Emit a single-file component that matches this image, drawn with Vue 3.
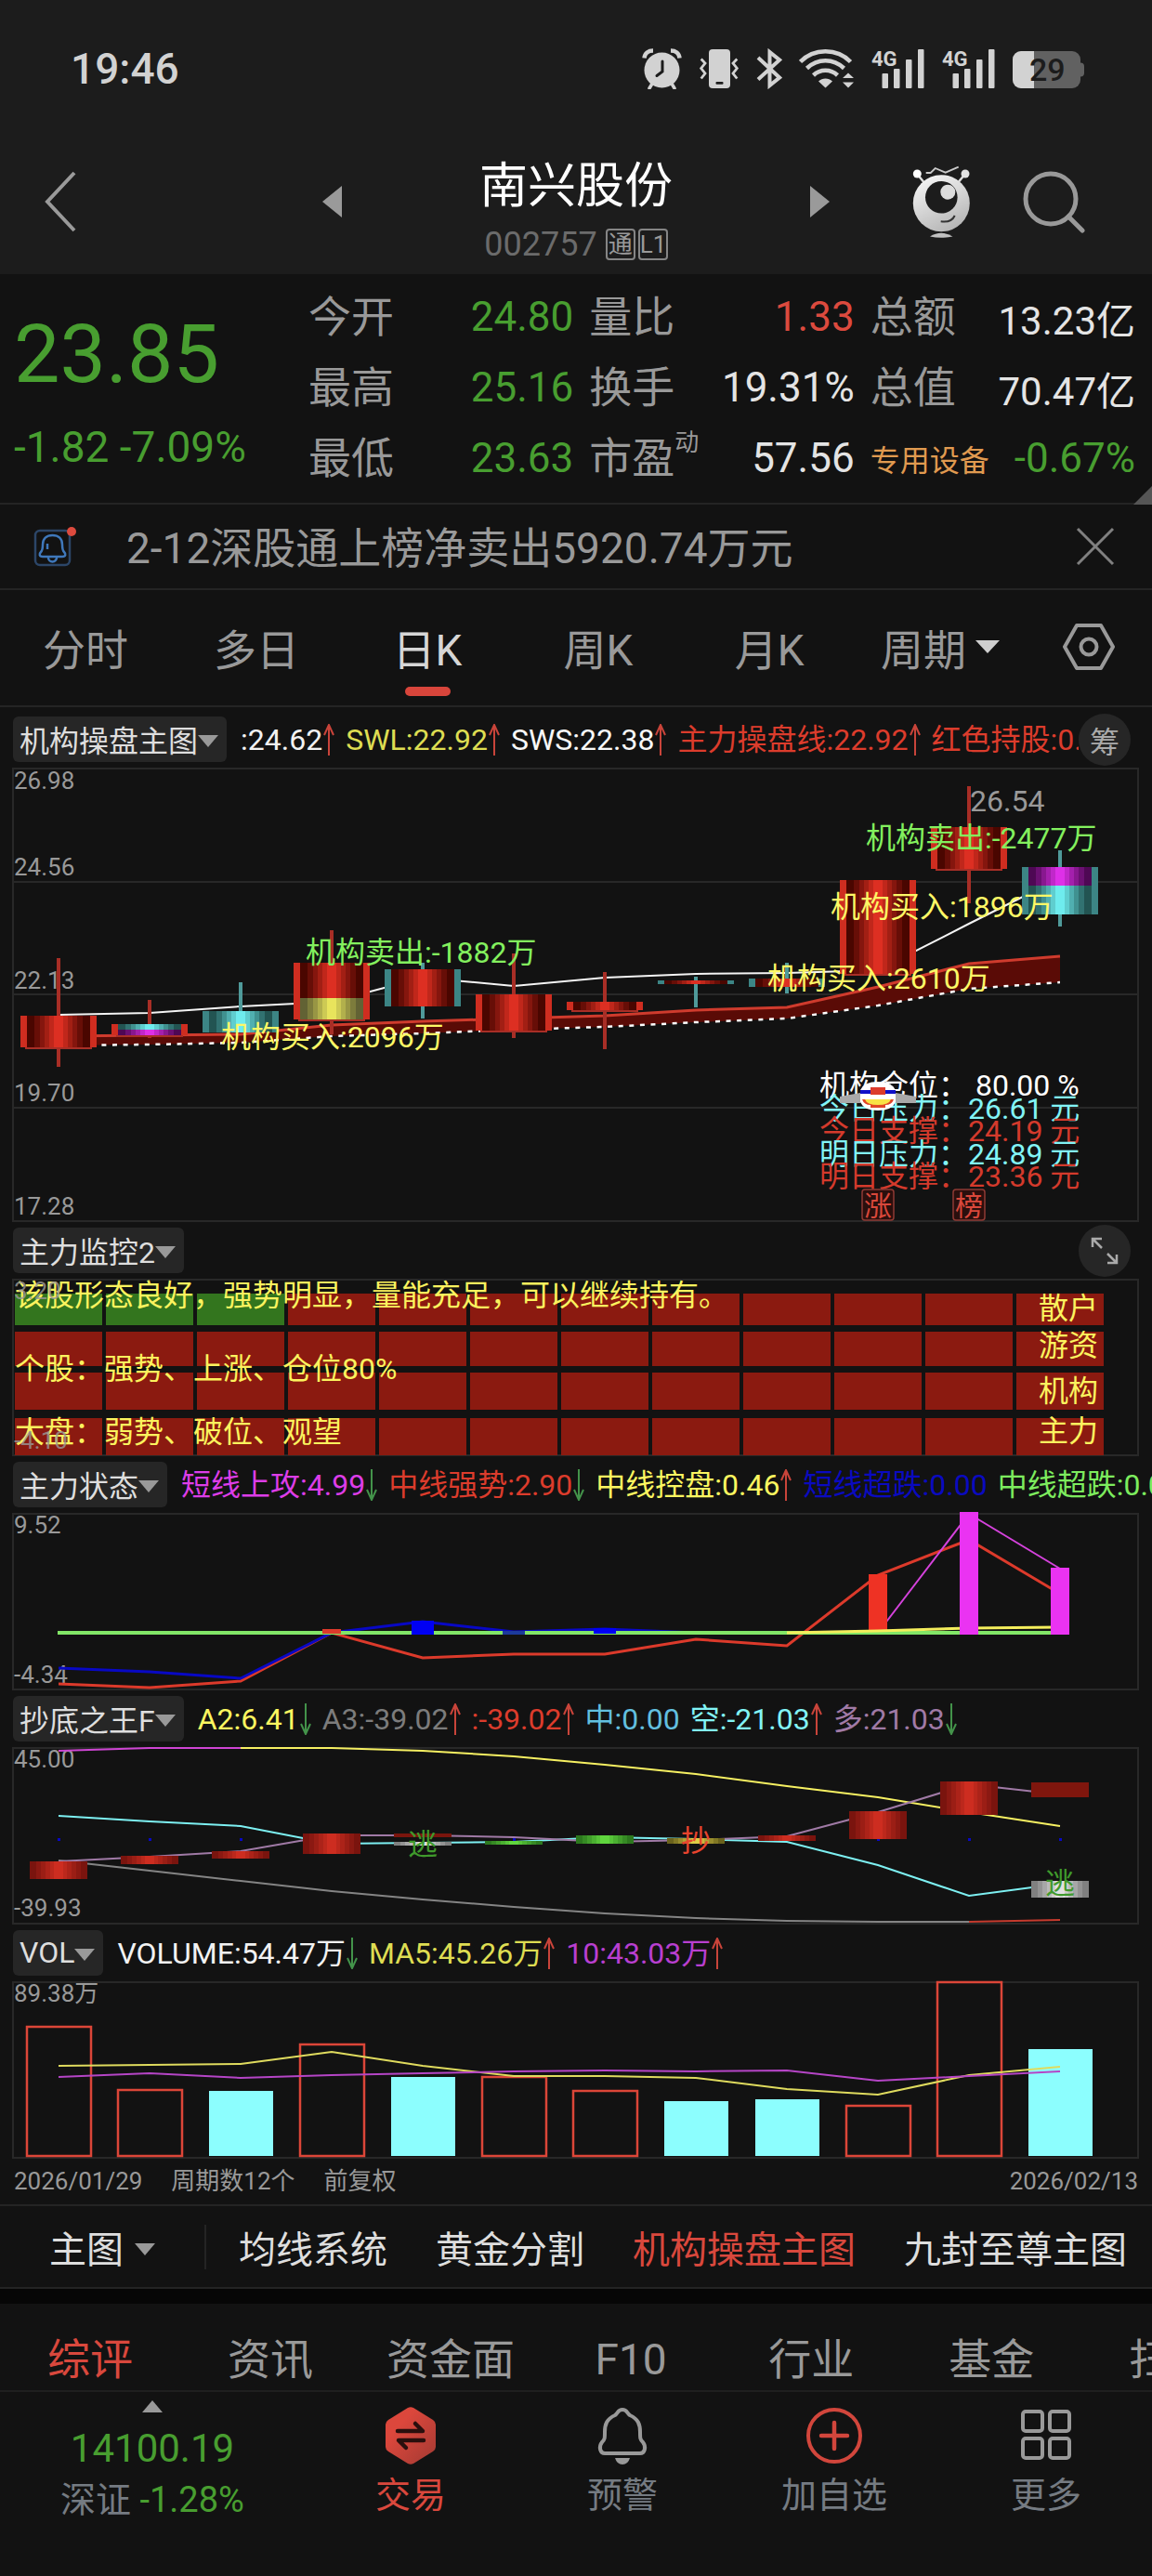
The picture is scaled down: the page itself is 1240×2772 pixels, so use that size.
<script setup>
import { ref } from 'vue';

const quotes = [
  { label: '今开', value: '24.80', tone: 'down' },
  { label: '量比', value: '1.33', tone: 'up' },
  { label: '总额', value: '13.23亿', size: 'small' },
  { label: '最高', value: '25.16', tone: 'down' },
  { label: '换手', value: '19.31%' },
  { label: '总值', value: '70.47亿', size: 'small' },
  { label: '最低', value: '23.63', tone: 'down' },
  { label: '市盈', sup: '动', value: '57.56' },
  { label: '专用设备', sector: true, value: '-0.67%', tone: 'down' }
];

const periods = ['分时', '多日', '日K', '周K', '月K'];
const period = ref('日K');
const templates = ['均线系统', '黄金分割', '机构操盘主图', '九封至尊主图'];
const template = ref('机构操盘主图');
const infoTabs = ['综评', '资讯', '资金面', 'F10', '行业', '基金', '扫雷'];
const infoTab = ref('综评');
const noticeOpen = ref(true);

const mainLegend = [
  { text: ':24.62', color: '#f2f2f2', dir: 'up' },
  { text: 'SWL:22.92', color: '#dedd52', dir: 'up' },
  { text: 'SWS:22.38', color: '#f8f8f8', dir: 'up' },
  { text: '主力操盘线:22.92', color: '#dc3c2c', dir: 'up' },
  { text: '红色持股:0.00', color: '#dc3c2c' }
];
const stateLegend = [
  { text: '短线上攻:4.99', color: '#dd3de8', dir: 'down' },
  { text: '中线强势:2.90', color: '#dc3c2c', dir: 'down' },
  { text: '中线控盘:0.46', color: '#fbf660', dir: 'up' },
  { text: '短线超跌:0.00', color: '#0a0ac0' },
  { text: '中线超跌:0.00', color: '#7dec5e' }
];
const bottomLegend = [
  { text: 'A2:6.41', color: '#fbf660', dir: 'down' },
  { text: 'A3:-39.02', color: '#7c7c7c', dir: 'up' },
  { text: ':-39.02', color: '#dc3c2c', dir: 'up' },
  { text: '中:0.00', color: '#62bfdf' },
  { text: '空:-21.03', color: '#82f4f6', dir: 'up' },
  { text: '多:21.03', color: '#a07aa6', dir: 'down' }
];
const volLegend = [
  { text: 'VOLUME:54.47万', color: '#f2f2f2', dir: 'down' },
  { text: 'MA5:45.26万', color: '#dedd52', dir: 'up' },
  { text: '10:43.03万', color: '#b93fd0', dir: 'up' }
];

// 每根K线的中心位置
const cx = i => 63 + 98 * i;
const line = (ys, start = 0) => ys.map((y, i) => `${cx(i + start)},${y}`).join(' ');

// 圆柱渐变：从两侧到中间逐级变亮
function bands(dark, light) {
  const edges = [0, 0.12, 0.2, 0.28, 0.36, 0.42];
  const stops = [];
  const mix = t => `rgb(${dark.map((d, k) => Math.round(d + (light[k] - d) * t)).join(',')})`;
  edges.forEach((from, i) => {
    const to = edges[i + 1] ?? 0.5;
    const color = mix(i / 5);
    stops.push({ at: from, color }, { at: to, color });
  });
  const mirrored = stops.map(s => ({ at: 1 - s.at, color: s.color })).reverse();
  return stops.concat(mirrored);
}
const gradients = [
  { id: 'g-red', stops: bands([74, 6, 0], [221, 47, 34]) },
  { id: 'g-teal', stops: bands([34, 84, 82], [110, 236, 238]) },
  { id: 'g-magenta', stops: bands([78, 8, 84], [222, 48, 232]) },
  { id: 'g-yellow', stops: bands([98, 98, 52], [232, 228, 92]) },
  { id: 'g-brick', stops: bands([122, 20, 14], [205, 45, 32]) },
  { id: 'g-green', stops: bands([44, 120, 30], [96, 214, 62]) },
  { id: 'g-olive', stops: bands([106, 98, 28], [222, 206, 70]) },
  { id: 'g-gray', stops: bands([128, 128, 128], [225, 225, 225]) }
];

const RED = '#cf2d20';
const TEAL = '#3c8585';
const candles = [
  { edge: RED, top: 266, bottom: 300, high: 204, low: 321, fills: [['g-red', 266, 300]] },
  { edge: RED, top: 275, bottom: 287, high: 249, low: 290, fills: [['g-teal', 275, 281], ['g-magenta', 281, 287]] },
  { edge: TEAL, top: 261, bottom: 284, high: 230, low: 284, fills: [['g-teal', 261, 284]] },
  { edge: RED, top: 209, bottom: 270, high: 174, low: 286, fills: [['g-red', 209, 247], ['g-yellow', 247, 270]] },
  { edge: TEAL, top: 216, bottom: 256, high: 209, low: 269, fills: [['g-red', 216, 256]] },
  { edge: RED, top: 243, bottom: 282, high: 199, low: 290, fills: [['g-red', 243, 282]] },
  { edge: RED, top: 251, bottom: 260, high: 219, low: 302, fills: [['g-red', 251, 260]] },
  { edge: TEAL, top: 228, bottom: 232, high: 224, low: 257, fills: [['g-red', 228, 232]] },
  { edge: TEAL, top: 226, bottom: 235, high: 209, low: 242, fills: [['g-red', 226, 235]] },
  { edge: RED, top: 120, bottom: 221, high: 120, low: 221, fills: [['g-red', 120, 221]] },
  { edge: RED, top: 63, bottom: 108, high: 19, low: 145, fills: [['g-red', 63, 108]] },
  { edge: TEAL, top: 106, bottom: 157, high: 88, low: 170, fills: [['g-magenta', 106, 126], ['g-teal', 126, 157]] }
];
const whiteLine = line([265, 263, 256, 251, 225, 234, 225, 221, 220, 217, 167, 118]);
const swl = [288, 287, 286, 276, 272, 269, 266, 260, 257, 235, 210, 202];
const sws = [298, 297, 295, 288, 285, 281, 278, 273, 269, 255, 237, 230];
const bandArea = line(swl) + ' ' + sws.map((y, i) => `${cx(i)},${y}`).reverse().join(' ');

const priceLabels = [
  ['26.98', 22], ['24.56', 115], ['22.13', 237], ['19.70', 358], ['17.28', 480]
];
const flows = [
  { text: '机构卖出:-1882万', x: 329, y: 209, sell: true },
  { text: '机构买入:2096万', x: 238, y: 300 },
  { text: '机构卖出:-2477万', x: 932, y: 86, sell: true },
  { text: '机构买入:1896万', x: 894, y: 160 },
  { text: '机构买入:2610万', x: 826, y: 237 }
];
const levels = [
  { text: '机构仓位： 80.00 %', y: 352, color: '#ffffff' },
  { text: '今日压力：26.61 元', y: 377, color: '#82f4f6' },
  { text: '今日支撑：24.19 元', y: 401, color: '#d43a2c' },
  { text: '明日压力：24.89 元', y: 426, color: '#82f4f6' },
  { text: '明日支撑：23.36 元', y: 450, color: '#d43a2c' }
];

// 主力监控
const monitorRows = [
  { label: '散户', y: 15, h: 34, base: 42, green: 3 },
  { label: '游资', y: 56, h: 37, base: 82, green: 0 },
  { label: '机构', y: 100, h: 40, base: 131, green: 0 },
  { label: '主力', y: 149, h: 40, base: 174, green: 0 }
];
const remarks = [
  ['该股形态良好，强势明显，量能充足，可以继续持有。', 28],
  ['个股：强势、上涨、仓位80%', 107],
  ['大盘：弱势、破位、观望', 175]
];

// 抄底之王
const kings = [
  [0, 122, 141, 'g-brick'], [1, 116, 125, 'g-brick'], [2, 111, 119, 'g-brick'],
  [3, 92, 114, 'g-brick'], [4, 101, 105, 'g-gray'], [5, 100, 104, 'g-green'],
  [6, 94, 103, 'g-green'], [7, 97, 103, 'g-olive'], [8, 94, 100, 'g-brick'],
  [9, 68, 98, 'g-brick'], [10, 36, 72, 'g-brick'], [11, 143, 161, 'g-gray']
];

const volumes = [
  [48, 1], [116, 1], [117, 0], [67, 1], [102, 0], [102, 1],
  [117, 1], [128, 0], [126, 0], [133, 1], [0, 1], [72, 0]
];
</script>

<template>
  <div class="page">
    <header class="top">
      <div class="status">
        <span class="clock">19:46</span>
        <div class="status-icons">
          <svg width="44" height="44" viewBox="0 0 44 44">
            <circle cx="22.5" cy="23.5" r="19" fill="#d2d2d2" />
            <path d="M3.5 10.5C4 5 8 2.5 13 2.5M41.5 10.5C41 5 37 2.5 32 2.5" stroke="#d2d2d2" stroke-width="4.5" fill="none" />
            <path d="M12 38l-3 5M33 38l3 5" stroke="#d2d2d2" stroke-width="3.5" stroke-linecap="round" />
            <path d="M23 14v11l-6 4.5" stroke="#1c1c1c" stroke-width="3" fill="none" stroke-linecap="round" />
          </svg>
          <svg width="44" height="44" viewBox="0 0 44 44">
            <rect x="11" y="1" width="23" height="42" rx="4" fill="#d2d2d2" />
            <rect x="18.5" y="36" width="8" height="2.7" rx="1" fill="#1c1c1c" />
            <path d="M2.7 11.5L7 16l-4.3 5.5L7 27l-4.3 5.5M41.3 11.5L37 16l4.3 5.5L37 27l4.3 5.5" stroke="#d2d2d2" stroke-width="2.8" fill="none" />
          </svg>
          <svg width="28" height="44" viewBox="0 0 28 44">
            <path d="M2 10L25 31.5L14.5 40V4L25 12.5L2 33.5" stroke="#d2d2d2" stroke-width="4" fill="none" />
          </svg>
          <svg width="60" height="44" viewBox="0 0 60 44">
            <g fill="none" stroke="#d2d2d2" stroke-width="4.5">
              <path d="M1.5 14.5C16 -0.5 41 -0.5 55.5 14.5" />
              <path d="M8.5 21.5C20 10.5 37 10.5 48.5 21.5" />
              <path d="M15.5 29C23 22 34 22 41.5 29" />
            </g>
            <path d="M21 35.5C25 31.5 32 31.5 36 35.5L28.5 42.5z" fill="#d2d2d2" />
            <path d="M53 26.5l6 5.5H47zM53 42.5l6-6H47z" fill="#d2d2d2" />
          </svg>
          <svg v-for="n in 2" :key="n" class="signal" width="58" height="44" viewBox="0 0 58 44">
            <text class="net" x="0" y="19">4G</text>
            <g fill="#d2d2d2">
              <rect x="11.5" y="27" width="6.5" height="16" rx="1" />
              <rect x="24" y="22" width="6.5" height="21" rx="1" />
              <rect x="37" y="12" width="6.5" height="31" rx="1" />
              <rect x="50" y="1" width="6.5" height="42" rx="1" />
            </g>
          </svg>
          <svg width="78" height="44" viewBox="0 0 78 44">
            <rect x="0" y="3" width="73" height="40" rx="9" fill="#616161" />
            <path d="M9 3H23V43H9a9 9 0 0 1 -9 -9V12a9 9 0 0 1 9 -9z" fill="#d2d2d2" />
            <path d="M73 15.5a4 4 0 0 1 4 4v7a4 4 0 0 1 -4 4z" fill="#616161" />
            <text class="battery" x="18" y="35">29</text>
          </svg>
        </div>
      </div>

      <div class="title-bar">
        <div class="side">
          <button class="plain" aria-label="返回">
            <svg width="36" height="66" viewBox="0 0 36 66"><path d="M33 2L4 33l29 31" fill="none" stroke="#9a9a9a" stroke-width="4" /></svg>
          </button>
          <button class="plain" aria-label="上一只">
            <svg width="21" height="34" viewBox="0 0 21 34"><path d="M21 0v34L0 17z" fill="#9a9a9a" /></svg>
          </button>
        </div>
        <div class="stock">
          <h1>南兴股份</h1>
          <div class="code">002757<span class="tag first">通</span><span class="tag">L1</span></div>
        </div>
        <div class="side right">
          <button class="plain" aria-label="下一只">
            <svg width="21" height="34" viewBox="0 0 21 34"><path d="M0 0v34l21-17z" fill="#9a9a9a" /></svg>
          </button>
          <div class="tools">
            <button class="plain" aria-label="助手">
              <svg width="63" height="78" viewBox="0 0 63 78">
                <defs>
                  <linearGradient id="face" x1="0.2" y1="0" x2="0.7" y2="1">
                    <stop offset="0" stop-color="#f6f6f6" />
                    <stop offset="1" stop-color="#b4b4b4" />
                  </linearGradient>
                </defs>
                <path d="M5 9l9 11M57 9l-9 11" stroke="#dedede" stroke-width="2.5" />
                <circle cx="5.3" cy="9" r="4.5" fill="#fff" />
                <circle cx="57" cy="9" r="4.5" fill="#e4e4e4" />
                <path d="M14.7 8h5l5-5l11 4.7l14-6" fill="none" stroke="#c9c9c9" stroke-width="1.8" />
                <circle cx="31.3" cy="40.7" r="30.5" fill="url(#face)" />
                <circle cx="31.3" cy="34.3" r="17.3" fill="#1c1c1c" />
                <circle cx="38.3" cy="28.7" r="8" fill="#dcdcdc" />
                <path d="M30.7 60.3Q42 62 45.7 54" fill="none" stroke="#333" stroke-width="2" />
                <path d="M19 76.5Q31 69 43.5 76.5Q31 79 19 76.5z" fill="#c0c0c0" />
              </svg>
            </button>
            <button class="plain" aria-label="搜索">
              <svg width="67" height="67" viewBox="0 0 67 67">
                <circle cx="30" cy="30" r="27" fill="none" stroke="#999" stroke-width="5" />
                <path d="M49 49l15 15" stroke="#999" stroke-width="5" stroke-linecap="round" />
              </svg>
            </button>
          </div>
        </div>
      </div>
    </header>

    <section class="quote">
      <div class="last">
        <div class="price">23.85</div>
        <div class="change">-1.82 -7.09%</div>
      </div>
      <div class="fields">
        <div v-for="q in quotes" :key="q.label" class="field">
          <span :class="q.sector ? 'sector' : 'label'">{{ q.label }}<sup v-if="q.sup">{{ q.sup }}</sup></span>
          <span class="value" :class="[q.tone, q.size]">{{ q.value }}</span>
        </div>
      </div>
      <i class="corner"></i>
    </section>

    <section v-if="noticeOpen" class="notice">
      <svg width="46" height="46" viewBox="0 0 46 46">
        <rect x="2" y="6" width="37" height="37" rx="5" fill="none" stroke="#2c4668" stroke-width="2.5" />
        <path d="M10 34c-4 0-4-3-2-5c2-2 2-4 2-8c0-6 4-10 10.5-10s10.5 4 10.5 10c0 4 0 6 2 8c2 2 2 5-2 5z" fill="none" stroke="#3f78bb" stroke-width="2.5" />
        <path d="M16 35a4.5 4.5 0 0 0 9 0M15 20v6" fill="none" stroke="#3f78bb" stroke-width="2.5" />
        <circle cx="41" cy="7" r="5" fill="#dc4a3e" />
      </svg>
      <span class="notice-text">2-12深股通上榜净卖出5920.74万元</span>
      <button class="plain" aria-label="关闭" @click="noticeOpen = false">
        <svg width="42" height="42" viewBox="0 0 42 42"><path d="M2 2l38 38M40 2L2 40" stroke="#808080" stroke-width="3" /></svg>
      </button>
    </section>

    <nav class="periods">
      <button v-for="p in periods" :key="p" :class="{ active: p === period }" @click="period = p">{{ p }}</button>
      <button>周期<svg class="caret" width="26" height="14" viewBox="0 0 26 14"><path d="M0 0h26L13 14z" fill="#cfcfcf" /></svg></button>
      <button class="setting" aria-label="设置">
        <svg width="56" height="52" viewBox="0 0 56 52">
          <path d="M15 3h26l13 23l-13 23h-26L2 26z" fill="none" stroke="#999" stroke-width="4" stroke-linejoin="round" />
          <circle cx="28" cy="26" r="8.5" fill="none" stroke="#999" stroke-width="4" />
        </svg>
      </button>
    </nav>

    <main class="charts">
      <svg class="defs" width="0" height="0">
        <defs>
          <linearGradient v-for="g in gradients" :id="g.id" :key="g.id">
            <stop v-for="(s, i) in g.stops" :key="i" :offset="s.at" :stop-color="s.color" />
          </linearGradient>
        </defs>
      </svg>

      <div class="chart-head">
        <button class="chip">机构操盘主图<i></i></button>
        <div class="legend">
          <span v-for="l in mainLegend" :key="l.text" :style="{ color: l.color }">{{ l.text }}<svg v-if="l.dir" class="arrow" :class="l.dir" width="14" height="34" viewBox="0 0 14 34"><path d="M7 34V1M2 12L7 1l5 11" /></svg></span>
        </div>
        <button class="round">筹</button>
      </div>
      <svg class="chart" viewBox="0 0 1240 487">
        <g class="grid">
          <rect x="14" y="0" width="1211" height="487" />
          <path d="M14 122H1225M14 243H1225M14 365H1225" />
        </g>
        <text v-for="p in priceLabels" :key="p[0]" class="axis" x="15" :y="p[1]">{{ p[0] }}</text>
        <polyline :points="whiteLine" class="stroke" stroke="#f4f4f4" stroke-width="2" />
        <polygon :points="bandArea" fill="#5a0b06" />
        <polyline :points="line(swl)" class="stroke" stroke="#cf3b2d" stroke-width="3" />
        <polyline :points="line(sws)" class="stroke" stroke="#fff" stroke-width="2.5" stroke-dasharray="5 6.6" />
        <g v-for="(c, i) in candles" :key="i">
          <rect :x="cx(i) - 2" :y="c.high" width="4" :height="c.low - c.high" :fill="c.edge === RED ? '#a82e26' : '#4f9a9a'" />
          <rect :x="cx(i) - 41" :y="c.top" width="82" :height="c.bottom - c.top" :fill="c.edge" />
          <rect v-for="f in c.fills" :key="f[1]" :x="cx(i) - 34" :y="f[1]" width="68" :height="f[2] - f[1]" :fill="`url(#${f[0]})`" />
          <rect v-if="c.edge === RED" :x="cx(i) - 36" :y="c.bottom" width="72" height="2" fill="#a82e26" />
        </g>
        <text class="peak" x="1044" y="46">26.54</text>
        <text v-for="f in flows" :key="f.text" class="note" :x="f.x" :y="f.y" :fill="f.sell ? '#83f05e' : '#fdf866'">{{ f.text }}</text>
        <text v-for="l in levels" :key="l.text" class="note" x="882" :y="l.y" :fill="l.color">{{ l.text }}</text>
        <g>
          <path d="M904 353l22-4v11h-22zM986 353l-22-4v11h22z" fill="#a9a9a9" />
          <path d="M926 346q4-9 19-9t19 9v13q-4 9-19 9t-19-9z" fill="#fff" />
          <rect x="926" y="346" width="38" height="4" fill="#1010c8" />
          <rect x="937" y="343" width="16" height="8" fill="#dc3c2c" />
          <path d="M928 356h34q-2 6-9 6v3h-16v-3q-7 0-9-6z" fill="#e04426" />
          <path d="M931 356h28q-2 6-14 6t-14-6z" fill="#f8e246" />
        </g>
        <g v-for="(t, i) in ['涨', '榜']" :key="t">
          <rect :x="cx(9 + i) - 17" y="453" width="34" height="33" rx="3" fill="#2a0f0d" stroke="#8f3a34" stroke-width="1.5" />
          <text class="mark" :x="cx(9 + i)" y="481">{{ t }}</text>
        </g>
      </svg>

      <div class="chart-head">
        <button class="chip">主力监控2<i></i></button>
        <div class="legend"></div>
        <button class="round" aria-label="展开">
          <svg width="30" height="30" viewBox="0 0 30 30"><path d="M2 11V2h10M2 2l10 10M28 19v9H18M28 28L18 18" fill="none" stroke="#aaa" stroke-width="2.5" /></svg>
        </button>
      </div>
      <svg class="chart" viewBox="0 0 1240 189">
        <g class="grid"><rect x="14" y="0" width="1211" height="189" /></g>
        <g v-for="r in monitorRows" :key="r.label">
          <rect v-for="n in 12" :key="n" :x="98 * n - 82" :y="r.y" width="94" :height="r.h" :fill="n <= r.green ? '#33751e' : '#8b1a10'" />
          <text class="note" x="1118" :y="r.base" fill="#fbf35e">{{ r.label }}</text>
        </g>
        <text v-for="r in remarks" :key="r[0]" class="note" x="16" :y="r[1]" fill="#fbf35e">{{ r[0] }}</text>
        <text class="axis faded" x="15" y="21">3.20</text>
        <text class="axis faded" x="15" y="182">-4.10</text>
      </svg>

      <div class="chart-head">
        <button class="chip">主力状态<i></i></button>
        <div class="legend">
          <span v-for="l in stateLegend" :key="l.text" :style="{ color: l.color }">{{ l.text }}<svg v-if="l.dir" class="arrow" :class="l.dir" width="14" height="34" viewBox="0 0 14 34"><path d="M7 34V1M2 12L7 1l5 11" /></svg></span>
        </div>
      </div>
      <svg class="chart" viewBox="0 0 1240 189">
        <g class="grid"><rect x="14" y="0" width="1211" height="189" /></g>
        <text class="axis" x="15" y="21">9.52</text>
        <text class="axis" x="15" y="182">-4.34</text>
        <polyline :points="line([183, 187, 180, 128, 155, 151, 151, 135, 142, 66, 28, 86])" class="stroke" stroke="#dc3a2b" stroke-width="3" />
        <polyline :points="line([166, 170, 177, 128, 116, 127, 124, 128])" class="stroke" stroke="#0808c4" stroke-width="3" />
        <polyline :points="line([128, 0, 59], 9)" class="stroke" stroke="#d542dc" stroke-width="2" />
        <rect x="935" y="65" width="20" height="65" fill="#ee3224" />
        <path d="M62 128H1141" stroke="#82e667" stroke-width="4" />
        <polyline :points="line([128, 126, 123, 122], 8)" class="stroke" stroke="#f4ee5c" stroke-width="3" />
        <rect x="347" y="124" width="20" height="5" fill="#dc3a2b" />
        <g fill="#0000f4">
          <rect x="443" y="115" width="24" height="15" />
          <rect x="541" y="126" width="24" height="4" fill="#1c3a9c" />
          <rect x="639" y="123" width="24" height="6" />
        </g>
        <rect x="1033" y="-2" width="20" height="132" fill="#ea33f2" />
        <rect x="1131" y="58" width="20" height="72" fill="#ea33f2" />
      </svg>

      <div class="chart-head">
        <button class="chip">抄底之王F<i></i></button>
        <div class="legend">
          <span v-for="l in bottomLegend" :key="l.text" :style="{ color: l.color }">{{ l.text }}<svg v-if="l.dir" class="arrow" :class="l.dir" width="14" height="34" viewBox="0 0 14 34"><path d="M7 34V1M2 12L7 1l5 11" /></svg></span>
        </div>
      </div>
      <svg class="chart" viewBox="0 0 1240 189">
        <g class="grid"><rect x="14" y="0" width="1211" height="189" /></g>
        <text class="axis" x="15" y="21">45.00</text>
        <text class="axis" x="15" y="181">-39.93</text>
        <g class="stroke" stroke-width="2">
          <polyline :points="line([121, 132, 143, 154, 163, 171, 178, 183, 186, 187, 187])" stroke="#848484" />
          <polyline :points="line([187, 185], 10)" stroke="#c63b2e" />
          <polyline :points="line([3, 0, 0])" stroke="#cf45d4" />
          <polyline :points="line([0, 0, 3, 9, 18, 28, 41, 53, 69, 84], 2)" stroke="#f6f062" />
          <polyline :points="line([73, 79, 84, 103, 102, 101, 96, 98, 101, 126, 159, 146])" stroke="#7df0f2" />
          <polyline :points="line([122, 117, 111, 94, 94, 96, 101, 99, 95, 69, 39, 50])" stroke="#a07aa6" />
        </g>
        <rect v-for="i in [0, 1, 2, 5, 9, 10, 11]" :key="i" :x="cx(i) - 1" y="97" width="3" height="3" fill="#0808c4" />
        <rect x="424" y="92" width="62" height="4" fill="#7a150d" />
        <rect x="1110" y="37" width="62" height="16" fill="#7f160d" />
        <rect v-for="k in kings" :key="k[0]" :x="cx(k[0]) - 31" :y="k[1]" width="62" :height="k[2] - k[1]" :fill="`url(#${k[3]})`" />
        <text class="note mid" :x="cx(4)" y="115" fill="#3f9a2c">逃</text>
        <text class="note mid" :x="cx(7)" y="111" fill="#e8442e">抄</text>
        <text class="note mid" :x="cx(11)" y="157" fill="#3f9a2c">逃</text>
      </svg>

      <div class="chart-head">
        <button class="chip">VOL<i></i></button>
        <div class="legend">
          <span v-for="l in volLegend" :key="l.text" :style="{ color: l.color }">{{ l.text }}<svg v-if="l.dir" class="arrow" :class="l.dir" width="14" height="34" viewBox="0 0 14 34"><path d="M7 34V1M2 12L7 1l5 11" /></svg></span>
        </div>
      </div>
      <svg class="chart" viewBox="0 0 1240 189">
        <g class="grid"><rect x="14" y="0" width="1211" height="189" /></g>
        <text class="axis" x="15" y="21">89.38万</text>
        <g v-for="(v, i) in volumes" :key="i">
          <rect v-if="v[1]" :x="cx(i) - 34" :y="v[0]" width="69" :height="187 - v[0]" fill="none" stroke="#dc4638" stroke-width="2.5" />
          <rect v-else :x="cx(i) - 34" :y="v[0]" width="69" :height="187 - v[0]" fill="#8cfefe" />
        </g>
        <polyline :points="line([90, 89, 88, 75, 90, 101, 101, 103, 115, 121, 100, 91])" class="stroke" stroke="#dfdb5e" stroke-width="2" />
        <polyline :points="line([102, 98, 103, 100, 98, 96, 95, 96, 95, 106, 101, 96])" class="stroke" stroke="#b545c6" stroke-width="2" />
      </svg>

      <div class="dates">
        <span>2026/01/29</span><span>周期数12个</span><span>前复权</span><span class="end">2026/02/13</span>
      </div>
    </main>

    <div class="templates">
      <button class="kind">主图<i></i></button>
      <div class="template-list">
        <button v-for="t in templates" :key="t" :class="{ active: t === template }" @click="template = t">{{ t }}</button>
      </div>
    </div>

    <nav class="info">
      <button v-for="t in infoTabs" :key="t" :class="{ active: t === infoTab }" @click="infoTab = t">{{ t }}</button>
    </nav>

    <footer class="bottom">
      <button class="index">
        <svg width="22" height="13" viewBox="0 0 22 13"><path d="M11 0l11 13H0z" fill="#999" /></svg>
        <span class="point">14100.19</span>
        <span class="index-name">深证 <b>-1.28%</b></span>
      </button>
      <button class="action trade">
        <svg width="56" height="62" viewBox="0 0 56 62">
          <defs>
            <linearGradient id="hex" x1="0" y1="0" x2="1" y2="1">
              <stop offset="0.3" stop-color="#dc473c" />
              <stop offset="1" stop-color="#a23a33" />
            </linearGradient>
          </defs>
          <path d="M25 1Q28 -0.5 31 1L52 14Q55 16 55 19V43Q55 46 52 48L31 61Q28 62.5 25 61L4 48Q1 46 1 43V19Q1 16 4 14z" fill="url(#hex)" />
          <path d="M14 26H41L33 18M42 36H15L23 44" fill="none" stroke="#2a0f0d" stroke-width="4.5" stroke-linecap="round" stroke-linejoin="round" />
        </svg>
        <span>交易</span>
      </button>
      <button class="action">
        <svg width="56" height="62" viewBox="0 0 56 62">
          <path d="M28 3C23 3 23 7 20 9C11 13 9 19 9 27C9 34 9 35 6 38C2 43 4 50 9 50H47C52 50 54 43 50 38C47 35 47 34 47 27C47 19 45 13 36 9C33 7 33 3 28 3z" fill="none" stroke="#999" stroke-width="4" />
          <path d="M20 55h16q-2 7-8 7t-8-7z" fill="#999" />
        </svg>
        <span>预警</span>
      </button>
      <button class="action">
        <svg width="62" height="62" viewBox="0 0 62 62">
          <circle cx="31" cy="31" r="28" fill="none" stroke="#d2463c" stroke-width="4" />
          <path d="M31 17v28M17 31h28" stroke="#d2463c" stroke-width="4.5" stroke-linecap="round" />
        </svg>
        <span>加自选</span>
      </button>
      <button class="action">
        <svg width="56" height="62" viewBox="0 0 56 62">
          <g fill="none" stroke="#999" stroke-width="4">
            <rect x="3" y="5" width="21" height="21" rx="3" />
            <rect x="32" y="5" width="21" height="21" rx="3" />
            <rect x="3" y="34" width="21" height="21" rx="3" />
            <rect x="32" y="34" width="21" height="21" rx="3" />
          </g>
        </svg>
        <span>更多</span>
      </button>
    </footer>
  </div>
</template>

<style scoped>
.page {
  overflow: hidden;
  background: #121212;
  color: #999;
  font-family: Roboto, "Noto Sans CJK SC", sans-serif;
}

button {
  border: 0;
  padding: 0;
  margin: 0;
  background: none;
  color: inherit;
  font: inherit;
  cursor: pointer;
  white-space: nowrap;
}

svg {
  display: block;
  flex-shrink: 0;
}

/* 顶部 */
.top {
  height: 295px;
  background: #1c1c1c;
}

.status {
  display: flex;
  align-items: center;
  justify-content: space-between;
  height: 148px;
  padding: 0 72px 0 76px;
}

.clock {
  color: #d2d2d2;
  font-size: 46px;
  font-weight: 500;
}

.status-icons {
  display: flex;
  gap: 18px;
}

.signal {
  overflow: visible;
}

.net {
  fill: #d2d2d2;
  font-size: 22px;
  font-weight: 700;
}

.battery {
  fill: #1c1c1c;
  font-size: 34px;
  font-weight: 500;
}

.title-bar {
  display: grid;
  grid-template-columns: 1fr auto 1fr;
  gap: 148px;
  padding: 12px 47px 0;
}

.side {
  display: flex;
  align-items: center;
  justify-content: space-between;
  height: 114px;
}

.side.right {
  padding-right: 25px;
}

.tools {
  display: flex;
  align-items: center;
  gap: 56px;
}

.stock {
  text-align: center;
}

h1 {
  margin: 9px 0 0;
  color: #fff;
  font-size: 52px;
  font-weight: 400;
  line-height: 64px;
}

.code {
  display: flex;
  align-items: center;
  justify-content: center;
  gap: 3px;
  margin-top: 12px;
  color: #6b6b6b;
  font-size: 36px;
  line-height: 36px;
}

.tag {
  width: 28px;
  height: 30px;
  border: 2px solid #858585;
  border-radius: 4px;
  color: #999;
  font-size: 26px;
  line-height: 30px;
}

.tag.first {
  margin-left: 6px;
}

/* 行情 */
.quote {
  position: relative;
  display: flex;
  height: 246px;
  border-bottom: 2px solid #242424;
  color: #e4e4e4;
}

.last {
  width: 332px;
  padding-left: 15px;
  box-sizing: border-box;
  color: #489e30;
  white-space: nowrap;
}

.price {
  margin-top: 36px;
  font-size: 88px;
  line-height: 100px;
}

.change {
  margin-top: 24px;
  font-size: 46px;
  line-height: 52px;
}

.fields {
  flex: 1;
  display: grid;
  grid-template-columns: repeat(3, 1fr);
  grid-auto-rows: 76px;
  column-gap: 17px;
  padding: 8px 18px 0 0;
}

.field {
  display: flex;
  align-items: center;
  justify-content: space-between;
  white-space: nowrap;
}

.label {
  color: #999;
  font-size: 46px;
  line-height: 76px;
}

.label sup {
  font-size: 26px;
  line-height: 0;
  vertical-align: 24px;
}

.sector {
  color: #e09a50;
  font-size: 32px;
}

.value {
  font-size: 44px;
}

.value.small {
  font-size: 42px;
}

.up {
  color: #dc4a3e;
}

.down {
  color: #489e30;
}

.corner {
  position: absolute;
  right: 0;
  bottom: -2px;
  border-left: 20px solid transparent;
  border-bottom: 20px solid #555;
}

.notice {
  display: flex;
  align-items: center;
  height: 90px;
  padding: 0 40px 0 36px;
  border-bottom: 2px solid #242424;
}

.notice-text {
  flex: 1;
  padding: 0 0 4px 54px;
  font-size: 46px;
}

/* 周期切换 */
.periods {
  display: flex;
  height: 124px;
  border-bottom: 2px solid #242424;
  font-size: 46px;
}

.periods button {
  position: relative;
  display: flex;
  align-items: center;
  justify-content: center;
  flex: 0 0 14.84%;
  padding-bottom: 2px;
}

.periods .setting {
  flex: 1;
}

.periods .active {
  color: #d6d6d6;
}

.periods .active::after {
  content: "";
  position: absolute;
  bottom: 10px;
  width: 49px;
  height: 10px;
  border-radius: 5px;
  background: #d8453b;
}

.caret {
  margin-left: 10px;
}

/* 图表 */
.charts {
  padding-top: 3px;
}

.defs {
  position: absolute;
}

.chart-head {
  display: flex;
  align-items: center;
  height: 63px;
  padding-left: 14px;
  font-size: 32px;
}

.chip {
  display: flex;
  align-items: center;
  flex-shrink: 0;
  height: 49px;
  padding: 0 9px 2px 7px;
  border-radius: 6px;
  background: #262626;
  color: #dedede;
  box-sizing: border-box;
}

.chip i,
.kind i {
  margin-top: 6px;
  border: 11px solid transparent;
  border-top: 13px solid #999;
  border-bottom: 0;
}

.legend {
  flex: 1;
  display: flex;
  gap: 11px;
  margin-left: 15px;
  overflow: hidden;
  white-space: nowrap;
}

.legend span {
  display: flex;
  align-items: center;
  flex-shrink: 0;
  line-height: 40px;
}

.arrow path {
  fill: none;
  stroke: currentColor;
  stroke-width: 2;
}

.arrow.up {
  color: #c9443a;
}

.arrow.down {
  color: #43934a;
  transform: rotate(180deg);
}

.round {
  display: flex;
  align-items: center;
  justify-content: center;
  flex-shrink: 0;
  width: 56px;
  height: 56px;
  margin-right: 23px;
  border-radius: 50%;
  background: #262626;
  color: #aaa;
  font-size: 32px;
}

.chart {
  width: 100%;
  height: auto;
  overflow: visible;
}

.grid {
  fill: none;
  stroke: #282828;
  stroke-width: 2;
}

.stroke {
  fill: none;
}

.axis {
  fill: #999;
  font-size: 26px;
}

.faded {
  opacity: 0.8;
}

.peak {
  fill: #999;
  font-size: 32px;
}

.note {
  font-size: 32px;
}

.mid {
  text-anchor: middle;
}

.mark {
  fill: #d9483b;
  font-size: 30px;
  text-anchor: middle;
}

.dates {
  display: flex;
  gap: 31px;
  padding: 0 15px;
  font-size: 26px;
  line-height: 50px;
}

.dates .end {
  margin-left: auto;
}

.templates {
  display: flex;
  align-items: center;
  height: 87px;
  border-top: 2px solid #242424;
  border-bottom: 2px solid #242424;
  color: #dedede;
  font-size: 40px;
}

.kind {
  display: flex;
  align-items: center;
  justify-content: center;
  gap: 12px;
  flex: 0 0 222px;
  height: 48px;
  border-right: 2px solid #242424;
}

.template-list {
  display: flex;
  gap: 52px;
  padding-left: 35px;
}

.templates .active,
.info .active {
  color: #d9483d;
}

.info {
  display: flex;
  height: 64px;
  padding: 28px 0 1px;
  border-top: 16px solid #060606;
  border-bottom: 2px solid #1f1f1f;
  font-size: 46px;
  line-height: 64px;
}

.info button {
  flex: 0 0 15.65%;
}

/* 底部操作栏 */
.bottom {
  display: flex;
  align-items: flex-start;
  height: 199px;
  color: #757b82;
  font-size: 38px;
}

.index {
  display: flex;
  flex-direction: column;
  align-items: center;
  flex: 0 0 26.45%;
  padding-top: 9px;
}

.point {
  margin-top: 14px;
  color: #489e30;
  font-size: 42px;
  line-height: 50px;
}

.index-name {
  margin-top: 5px;
  line-height: 50px;
}

.index-name b {
  color: #489e30;
  font-weight: 400;
}

.action {
  display: flex;
  flex-direction: column;
  align-items: center;
  flex: 1;
  padding-top: 16px;
}

.action span {
  margin-top: 8px;
  line-height: 50px;
}

.trade {
  color: #d9483d;
}
</style>

<style>
body {
  margin: 0;
  background: #121212;
}
</style>
